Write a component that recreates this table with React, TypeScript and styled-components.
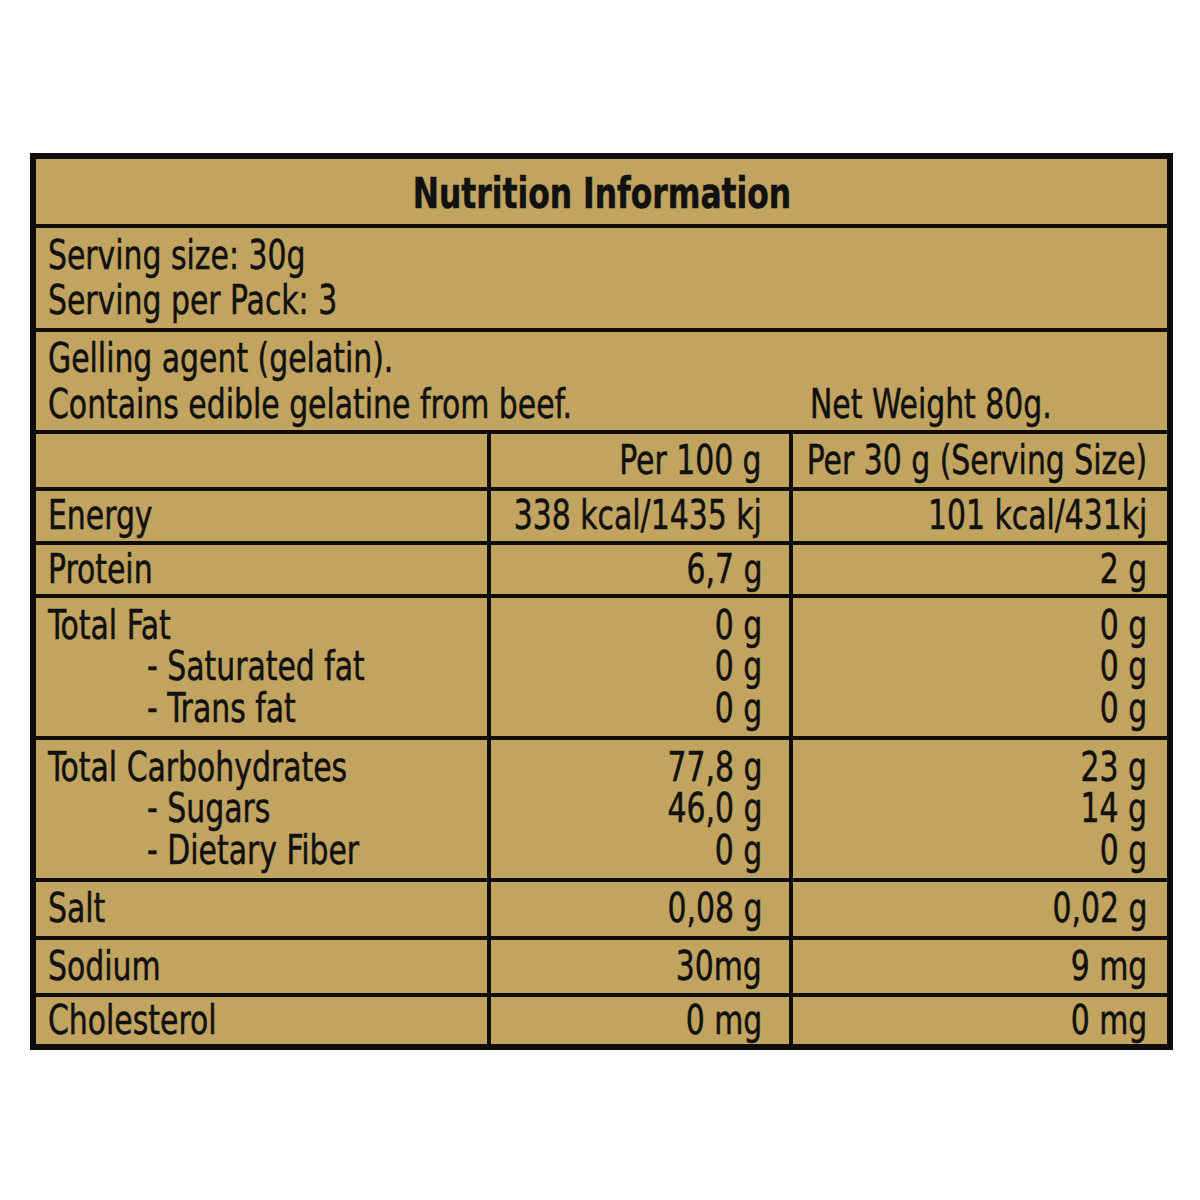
import React from "react";
import styled, { createGlobalStyle } from "styled-components";

const Global = createGlobalStyle`
  html, body { margin: 0; padding: 0; background: #ffffff; }
`;

const INK = "#0e0d0a";
const GOLD = "#c0a45f";

const Page = styled.div`
  padding: 153px 0 0 30px;
`;

const Label = styled.div`
  width: 1143px;
  box-sizing: border-box;
  border: 6px solid ${INK};
  background: ${GOLD};
  display: flex;
  flex-direction: column;
  font-family: "DejaVu Sans Condensed", "DejaVu Sans", "Liberation Sans", sans-serif;
  font-size: 40px;
  color: #111;
`;

/* condensed type: the label's face is a tall narrow sans */
const Txt = styled.span<{ $origin?: "left" | "right" | "center" }>`
  display: inline-block;
  white-space: nowrap;
  transform: scaleX(0.83);
  transform-origin: ${(p) => p.$origin ?? "left"} center;
  -webkit-text-stroke: 0.5px #111;
`;

const SubTxt = styled(Txt)`
  margin-left: 99px;
`;

const Row = styled.div<{ $h: number }>`
  height: ${(p) => p.$h}px;
  box-sizing: content-box;
  &:not(:first-child) {
    border-top: 4px solid ${INK};
  }
`;

const TitleRow = styled(Row)`
  display: flex;
  align-items: center;
  justify-content: center;
  padding-top: 3px;
  height: 62px;
  font-weight: 700;
  font-size: 42px;
`;

const InfoRow = styled(Row)`
  display: flex;
  flex-direction: column;
  justify-content: center;
  align-items: flex-start;
  padding-left: 12px;
  line-height: 45px;
`;

const NoteRow = styled(Row)`
  display: grid;
  grid-template-columns: 753px minmax(0, 1fr);
  align-items: center;
  line-height: 46px;
`;

const NoteText = styled.div`
  display: flex;
  flex-direction: column;
  align-items: flex-start;
  padding-left: 12px;
`;

const NetWeight = styled.div`
  align-self: end;
  padding: 0 0 3px 21px;
`;

const TableRow = styled(Row)`
  display: grid;
  grid-template-columns: 451px 302px minmax(0, 1fr);
  line-height: 41.5px;
`;

const NameCell = styled.div`
  display: flex;
  flex-direction: column;
  justify-content: center;
  align-items: flex-start;
  padding-left: 12px;
  min-width: 0;
`;

const ValueCell = styled.div<{ $pr: number }>`
  display: flex;
  flex-direction: column;
  justify-content: center;
  align-items: flex-end;
  min-width: 0;
  border-left: 4px solid ${INK};
  padding-right: ${(p) => p.$pr}px;
`;

type Item = { h: number; names: string[]; per100: string[]; perServing: string[] };

const items: Item[] = [
  { h: 50, names: ["Energy"], per100: ["338 kcal/1435 kj"], perServing: ["101 kcal/431kj"] },
  { h: 49, names: ["Protein"], per100: ["6,7 g"], perServing: ["2 g"] },
  {
    h: 138,
    names: ["Total Fat", "- Saturated fat", "- Trans fat"],
    per100: ["0 g", "0 g", "0 g"],
    perServing: ["0 g", "0 g", "0 g"],
  },
  {
    h: 138,
    names: ["Total Carbohydrates", "- Sugars", "- Dietary Fiber"],
    per100: ["77,8 g", "46,0 g", "0 g"],
    perServing: ["23 g", "14 g", "0 g"],
  },
  { h: 54, names: ["Salt"], per100: ["0,08 g"], perServing: ["0,02 g"] },
  { h: 53, names: ["Sodium"], per100: ["30mg"], perServing: ["9 mg"] },
  { h: 47, names: ["Cholesterol"], per100: ["0 mg"], perServing: ["0 mg"] },
];

export default function App() {
  return (
    <>
      <Global />
      <Page>
        <Label>
          <TitleRow $h={65}>
            <Txt $origin="center">Nutrition Information</Txt>
          </TitleRow>
          <InfoRow $h={100}>
            <Txt>Serving size: 30g</Txt>
            <Txt>Serving per Pack: 3</Txt>
          </InfoRow>
          <NoteRow $h={98}>
            <NoteText>
              <Txt>Gelling agent (gelatin).</Txt>
              <Txt>Contains edible gelatine from beef.</Txt>
            </NoteText>
            <NetWeight>
              <Txt>Net Weight 80g.</Txt>
            </NetWeight>
          </NoteRow>
          <TableRow $h={53}>
            <NameCell />
            <ValueCell $pr={27}>
              <Txt $origin="right">Per 100 g</Txt>
            </ValueCell>
            <ValueCell $pr={20}>
              <Txt $origin="right">Per 30 g (Serving Size)</Txt>
            </ValueCell>
          </TableRow>
          {items.map((it) => (
            <TableRow key={it.names[0]} $h={it.h}>
              <NameCell>
                {it.names.map((n, i) =>
                  i === 0 ? <Txt key={n}>{n}</Txt> : <SubTxt key={n}>{n}</SubTxt>
                )}
              </NameCell>
              <ValueCell $pr={27}>
                {it.per100.map((v, i) => (
                  <Txt key={i} $origin="right">
                    {v}
                  </Txt>
                ))}
              </ValueCell>
              <ValueCell $pr={20}>
                {it.perServing.map((v, i) => (
                  <Txt key={i} $origin="right">
                    {v}
                  </Txt>
                ))}
              </ValueCell>
            </TableRow>
          ))}
        </Label>
      </Page>
    </>
  );
}
